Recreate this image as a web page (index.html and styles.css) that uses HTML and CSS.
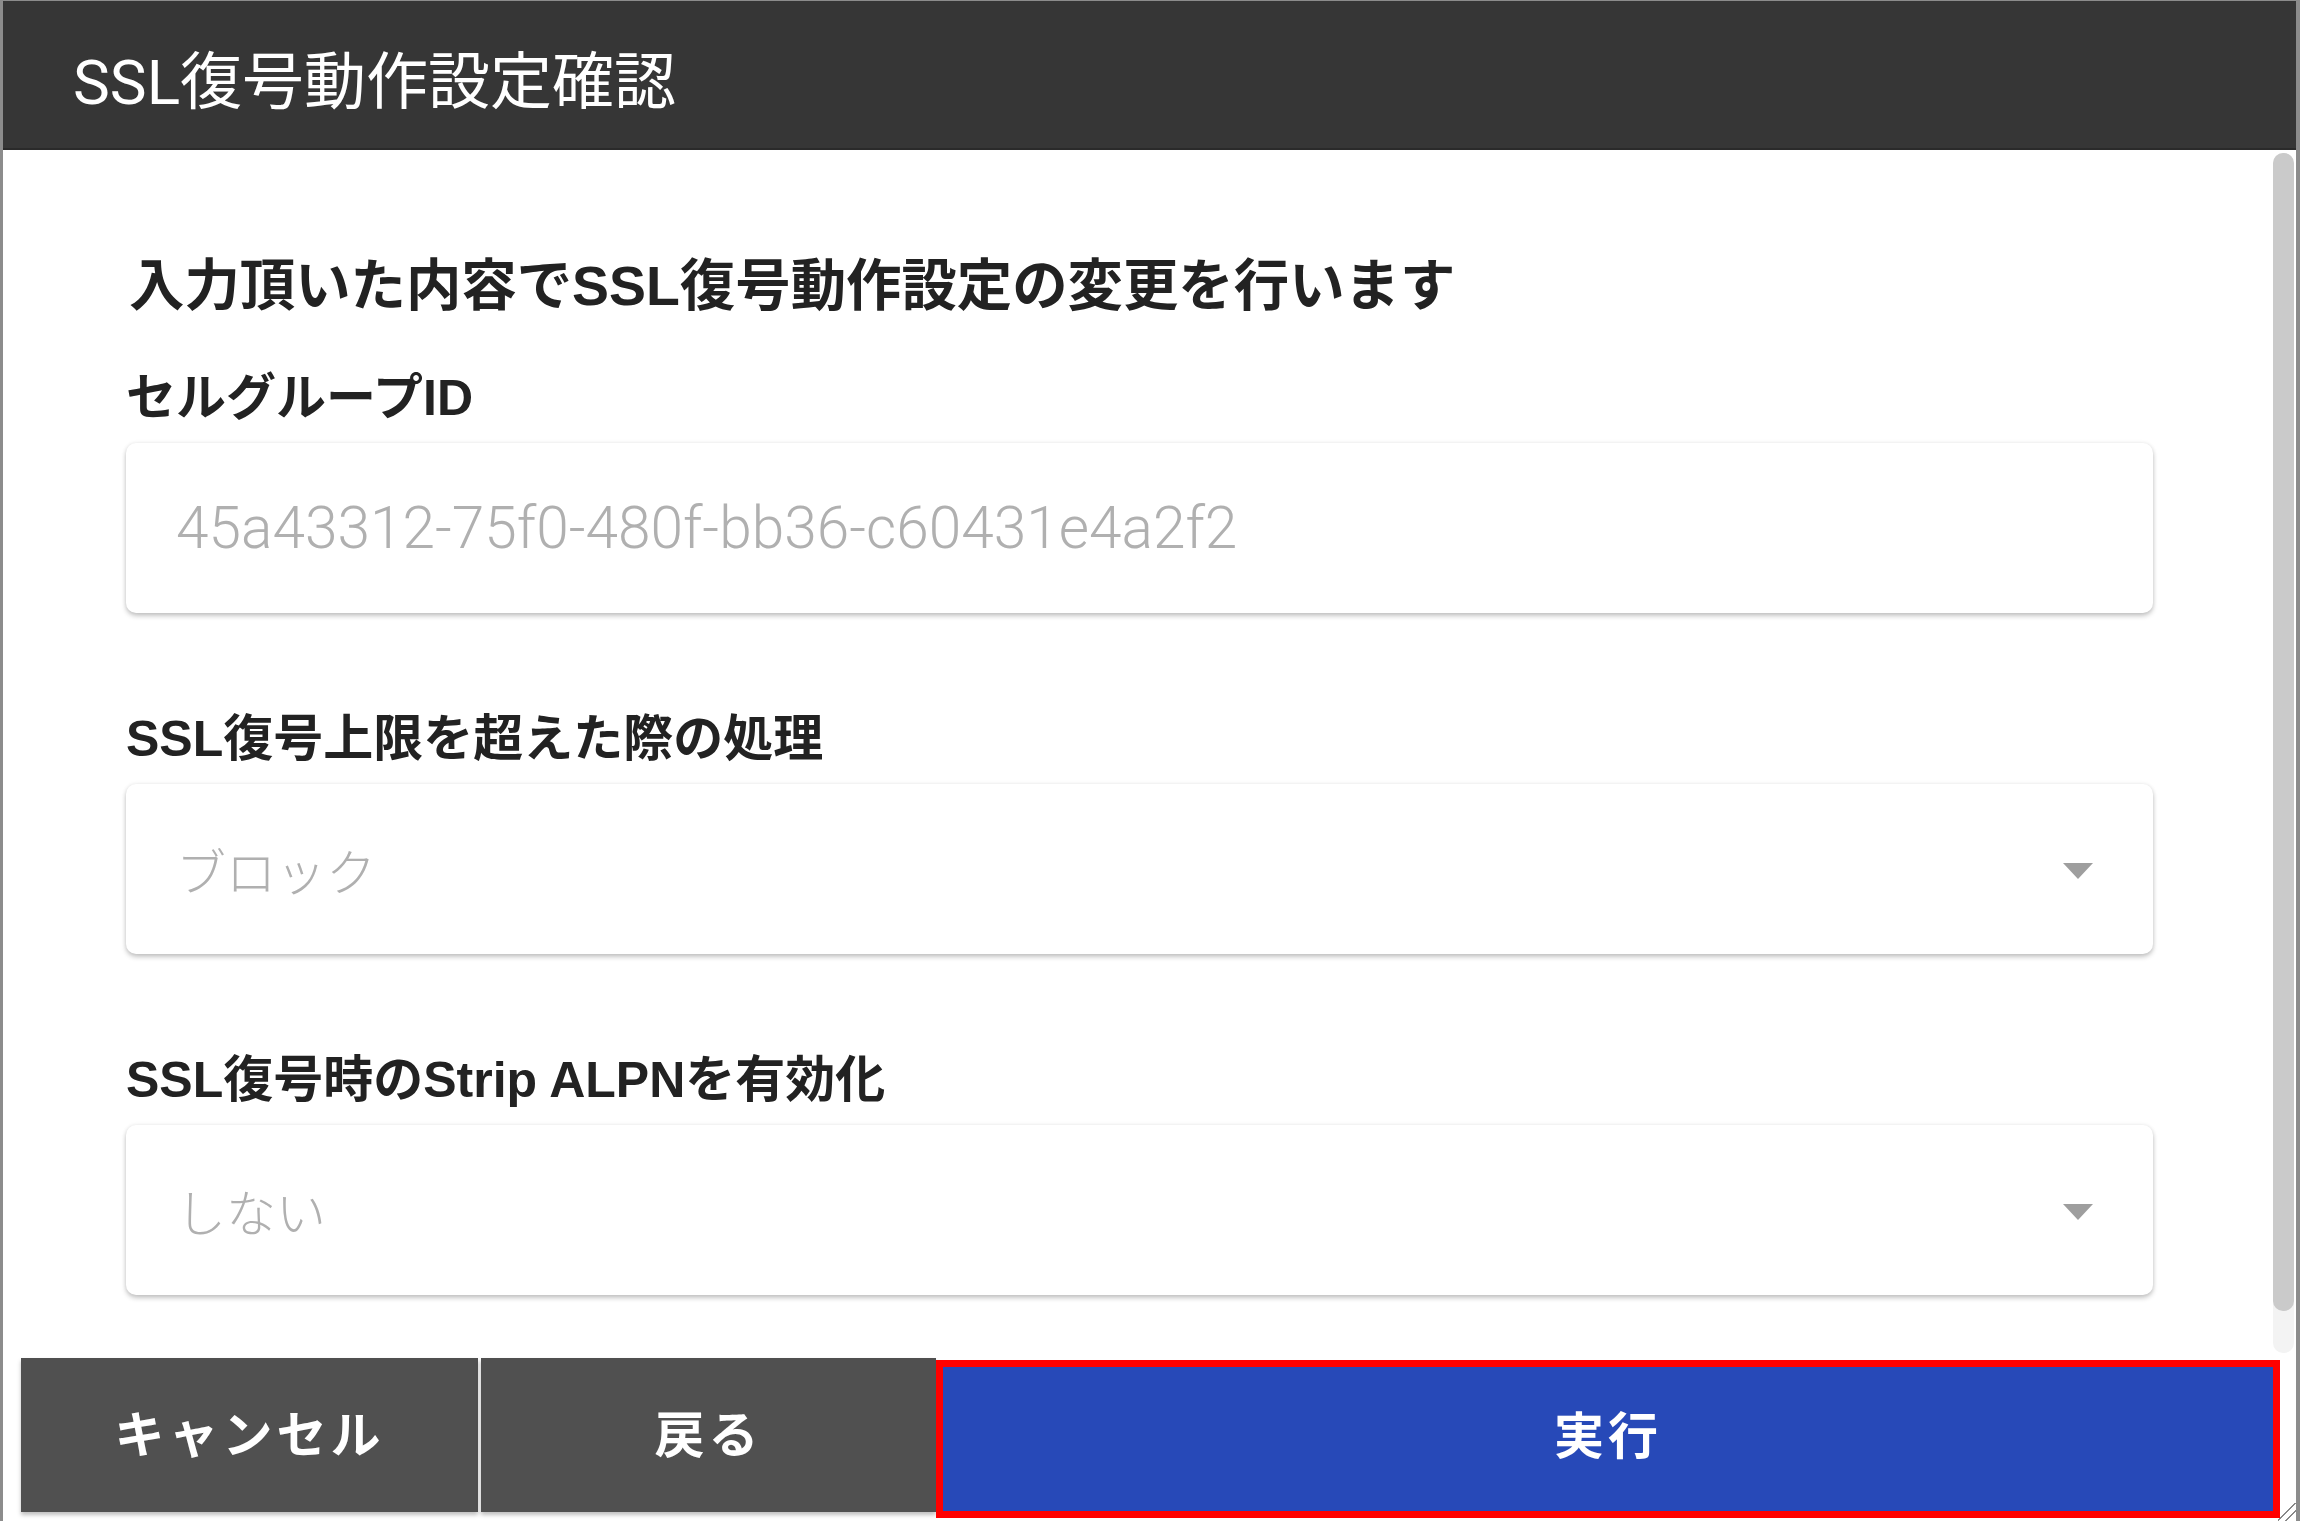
FILE: index.html
```html
<!DOCTYPE html>
<html lang="ja">
<head>
<meta charset="utf-8">
<title>SSL復号動作設定確認</title>
<link rel="stylesheet" href="styles.css">
</head>
<body>
<div class="dialog">
  <header class="header">SSL復号動作設定確認</header>
  <main class="content">
    <h1 class="lead">入力頂いた内容でSSL復号動作設定の変更を行います</h1>
    <section class="field first">
      <div class="label">セルグループID</div>
      <div class="box">45a43312-75f0-480f-bb36-c60431e4a2f2</div>
    </section>
    <section class="field">
      <div class="label">SSL復号上限を超えた際の処理</div>
      <div class="box select"><span>ブロック</span><span class="arrow"></span></div>
    </section>
    <section class="field">
      <div class="label">SSL復号時のStrip ALPNを有効化</div>
      <div class="box select"><span>しない</span><span class="arrow"></span></div>
    </section>
    <div class="scrolltrack"></div>
    <div class="scrollbar"></div>
  </main>
  <footer class="footer">
    <button class="btn btn-gray btn-cancel">キャンセル</button>
    <button class="btn btn-gray btn-back">戻る</button>
    <button class="btn btn-primary">実行</button>
  </footer>
  <div class="grip"></div>
</div>
</body>
</html>
```
FILE: styles.css
```css
html, body {
  margin: 0;
  padding: 0;
  width: 2300px;
  height: 1521px;
  overflow: hidden;
  background: #ffffff;
  font-family: "Roboto", "Noto Sans CJK JP", sans-serif;
}
.dialog {
  position: relative;
  box-sizing: border-box;
  width: 2300px;
  height: 1521px;
  border-top: 1px solid #8c8c8c;
  border-left: 3px solid #8c8c8c;
  border-right: 4px solid #8c8c8c;
  display: flex;
  flex-direction: column;
  background: #fff;
}
.header {
  height: 149px;
  flex: none;
  box-sizing: border-box;
  background: #363636;
  border-bottom: 2px solid #2a2a2a;
  color: #fff;
  font-size: 62px;
  font-weight: 400;
  display: flex;
  align-items: center;
  padding-left: 70px;
  padding-top: 4px;
}
.content {
  position: relative;
  flex: 1;
  padding: 102px 0 0 123px;
  box-sizing: border-box;
  width: 2150px;
}
.lead {
  margin: 0 0 0 3px;
  font-family: "Liberation Sans", "Noto Sans CJK JP", sans-serif;
  font-size: 55.4px;
  font-weight: 700;
  line-height: 68px;
  color: #222;
}
.field { margin-top: 96px; }
.field.first { margin-top: 48px; }
.label {
  font-family: "Liberation Sans", "Noto Sans CJK JP", sans-serif;
  font-size: 50px;
  font-weight: 700;
  line-height: 60px;
  color: #222;
  margin-bottom: 15px;
}
.box {
  height: 170px;
  box-sizing: border-box;
  background: #fff;
  border-radius: 10px;
  box-shadow: 0 3px 5px rgba(0,0,0,0.22), 0 0 4px rgba(0,0,0,0.08);
  display: flex;
  align-items: center;
  padding: 0 50px;
  font-size: 58.6px;
  color: #b0b0b0;
  font-weight: 300;
}
.select { justify-content: space-between; padding-right: 60px; }
.select span:first-child { font-size: 50px; }
.arrow {
  width: 0;
  height: 0;
  border-left: 15px solid transparent;
  border-right: 15px solid transparent;
  border-top: 16px solid #9e9e9e;
  margin-top: 4px;
}
.scrolltrack {
  position: absolute;
  top: 3px;
  right: -141px;
  width: 21px;
  height: 1200px;
  background: #f3f3f3;
  border-radius: 10px;
}
.scrollbar {
  position: absolute;
  top: 3px;
  right: -141px;
  width: 21px;
  height: 1158px;
  background: #cacaca;
  border-radius: 10px;
}
.footer {
  position: relative;
  z-index: 1;
  flex: none;
  display: flex;
  height: 154px;
  margin: 0 0 9px 18px;
  width: 2259px;
}
.btn {
  border: none;
  font-family: "Noto Sans CJK JP", sans-serif;
  font-size: 50px;
  font-weight: 700;
  color: #fff;
  letter-spacing: 4px;
  cursor: pointer;
  padding: 0 0 8px 0;
}
.btn-gray {
  background: #505050;
  box-shadow: 0 3px 4px rgba(0,0,0,0.25);
}
.btn-cancel { width: 457px; margin-right: 3px; }
.btn-back { width: 455px; }
.btn-primary {
  flex: 1;
  background: #2749b8;
  border: 7px solid #ff0000;
  margin-top: 2px;
  height: 158px;
  padding-bottom: 14px;
}
.grip {
  position: absolute;
  right: 0;
  bottom: 0;
  width: 18px;
  height: 18px;
  background: linear-gradient(135deg, transparent 45%, #888 45%, #888 52%, transparent 52%, transparent 68%, #888 68%, #888 75%, transparent 75%);
}
```
